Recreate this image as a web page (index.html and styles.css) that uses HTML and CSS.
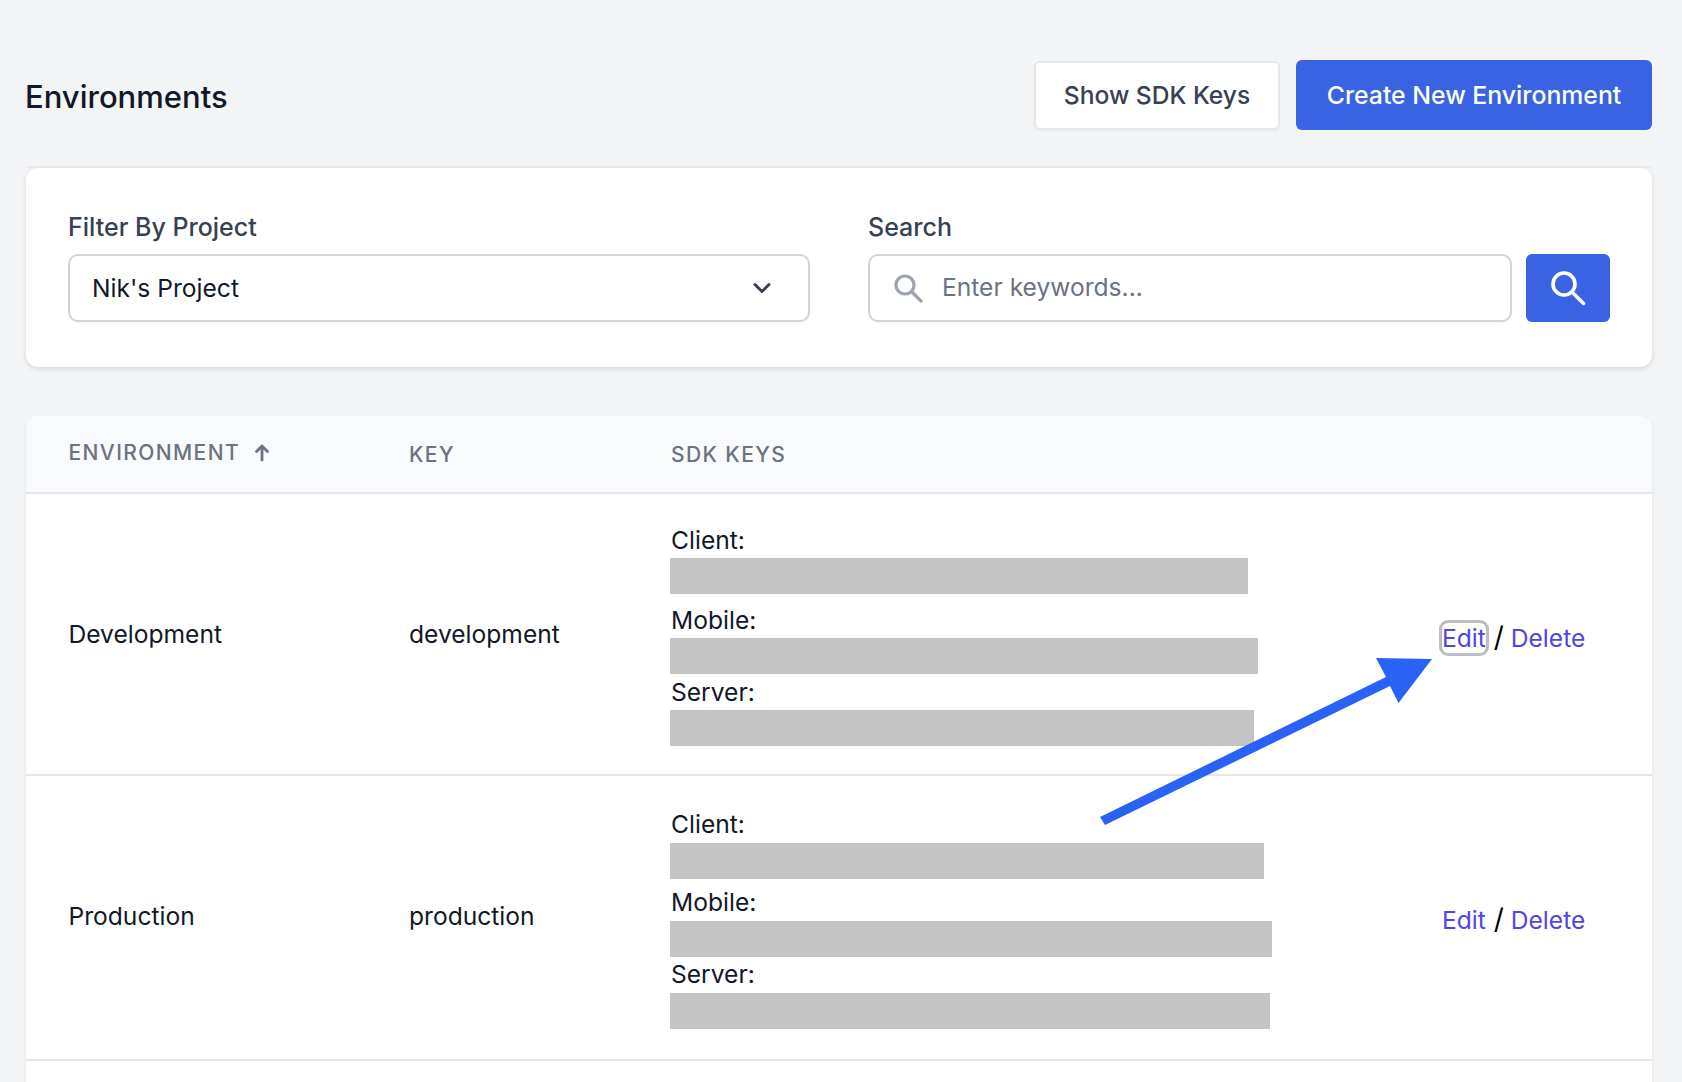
FILE: index.html
```html
<!DOCTYPE html>
<html lang="en">
<head>
    <meta charset="UTF-8">
    <title>Environments</title>
    <link rel="stylesheet" href="styles.css">
</head>
<body>
    <div class="page-header">
        <h1 class="page-title">Environments</h1>
        <div class="header-actions">
            <button type="button" class="btn btn-white">Show SDK Keys</button>
            <button type="button" class="btn btn-blue">Create New Environment</button>
        </div>
    </div>

    <div class="filter-card">
        <div class="filter-project">
            <label class="field-label">Filter By Project</label>
            <div class="select-box">
                <span>Nik's Project</span>
                <svg class="chevron" width="20" height="20" viewBox="0 0 20 20" fill="none" stroke="#374151" stroke-width="3" stroke-linecap="round" stroke-linejoin="round"><path d="M3 6.5l7 7 7-7"/></svg>
            </div>
        </div>
        <div class="filter-search">
            <label class="field-label">Search</label>
            <div class="search-row">
                <div class="search-box">
                    <svg width="32" height="32" viewBox="0 0 32 32" fill="none" stroke="#9ca3af" stroke-width="3.2" stroke-linecap="round"><circle cx="13" cy="13" r="9"/><path d="M20 20l9 9"/></svg>
                    <span class="placeholder">Enter keywords...</span>
                </div>
                <button type="button" class="search-btn">
                    <svg width="38" height="38" viewBox="0 0 38 38" fill="none" stroke="#fff" stroke-width="3.6" stroke-linecap="round"><circle cx="15" cy="15" r="11"/><path d="M23.5 23.5l11 11"/></svg>
                </button>
            </div>
        </div>
    </div>

    <div class="table-card">
        <div class="table-head">
            <div class="col-env head-env">ENVIRONMENT
                <svg width="16" height="18" viewBox="0 0 16 18" fill="none" stroke="#6b7280" stroke-width="2.8" stroke-linecap="round" stroke-linejoin="round"><path d="M8 16V2M2.5 7.5L8 2l5.500 5.500"/></svg>
            </div>
            <div class="col-key">KEY</div>
            <div class="col-sdk head-sdk">SDK KEYS</div>
        </div>

        <div class="table-row row-dev">
            <div class="col-env">Development</div>
            <div class="col-key">development</div>
            <div class="col-sdk">
                <div class="key-block key-first">
                    <div class="key-label">Client:</div>
                    <div class="key-bar" style="width: 578px"></div>
                </div>
                <div class="key-block">
                    <div class="key-label">Mobile:</div>
                    <div class="key-bar" style="width: 588px"></div>
                </div>
                <div class="key-block">
                    <div class="key-label">Server:</div>
                    <div class="key-bar" style="width: 584px"></div>
                </div>
            </div>
            <div class="col-actions"><a class="action-link focused">Edit</a> <span class="slash">/</span> <a class="action-link">Delete</a></div>
        </div>

        <div class="table-row row-prod">
            <div class="col-env">Production</div>
            <div class="col-key">production</div>
            <div class="col-sdk">
                <div class="key-block key-first">
                    <div class="key-label">Client:</div>
                    <div class="key-bar" style="width: 594px"></div>
                </div>
                <div class="key-block">
                    <div class="key-label">Mobile:</div>
                    <div class="key-bar" style="width: 602px"></div>
                </div>
                <div class="key-block">
                    <div class="key-label">Server:</div>
                    <div class="key-bar" style="width: 600px"></div>
                </div>
            </div>
            <div class="col-actions"><a class="action-link">Edit</a> <span class="slash">/</span> <a class="action-link">Delete</a></div>
        </div>
    </div>

    <svg class="arrow" width="1682" height="1082" viewBox="0 0 1682 1082"><polygon fill="#2962f5" points="1100,817 1105,825 1390,686 1398.500,703 1432,659 1376,658 1386,677"/></svg>
</body>
</html>
```

FILE: styles.css
```css
html, body {
    height: 100%;
    overflow: hidden;
}
body {
    margin: 0;
    padding: 61px 30px 0 26px;
    box-sizing: border-box;
    background-color: #f3f4f6;
    font-family: Inter, "Liberation Sans", sans-serif;
    font-size: 24.6px;
    color: #111827;
}

.page-header {
    display: flex;
    justify-content: space-between;
    align-items: center;
    height: 107px;
    padding-bottom: 37px;
    box-sizing: border-box;
    border-bottom: 2px solid #e9eaee;
}
.page-title {
    margin: 3px 0 0 -1px;
    font-size: 31px;
    font-weight: 500;
    color: #111827;
}
.header-actions {
    display: flex;
    gap: 16px;
    align-items: center;
}
.btn {
    font-family: inherit;
    font-size: 24.6px;
    font-weight: 500;
    border-radius: 6px;
    cursor: pointer;
}
.btn-white {
    width: 246px;
    height: 69px;
    background-color: #fff;
    color: #374151;
    border: 2px solid #e5e7eb;
    box-shadow: 0 1px 2px rgba(0, 0, 0, 0.05);
}
.btn-blue {
    width: 356px;
    height: 70px;
    font-size: 24.8px;
    background-color: #3a63e4;
    color: #fff;
    border: none;
}

.filter-card {
    display: flex;
    gap: 58px;
    height: 199px;
    padding: 43px 42px 0 42px;
    box-sizing: border-box;
    background-color: #fff;
    border-radius: 12px;
    box-shadow: 0 2px 5px rgba(0, 0, 0, 0.12);
}
.filter-project {
    width: 742px;
}
.filter-search {
    flex: 1;
}
.field-label {
    display: block;
    height: 43px;
    line-height: 32px;
    font-size: 25px;
    font-weight: 500;
    color: #374151;
}
.select-box, .search-box {
    height: 68px;
    box-sizing: border-box;
    display: flex;
    align-items: center;
    background-color: #fff;
    border: 2px solid #d1d5db;
    border-radius: 10px;
    box-shadow: 0 1px 2px rgba(0, 0, 0, 0.05);
}
.select-box {
    justify-content: space-between;
    padding: 0 36px 0 22px;
}
.search-row {
    display: flex;
    gap: 14px;
}
.search-box {
    flex: 1;
    padding-left: 22px;
    gap: 18px;
}
.placeholder {
    color: #6b7280;
    margin-top: -2px;
}
.search-btn {
    width: 84px;
    height: 68px;
    padding: 0;
    display: flex;
    align-items: center;
    justify-content: center;
    background-color: #3a63e4;
    border: none;
    border-radius: 6px;
}

.table-card {
    margin-top: 49px;
    height: 700px;
    background-color: #fff;
    border-radius: 12px 12px 0 0;
    box-shadow: 0 1px 3px rgba(0, 0, 0, 0.1);
}
.table-head {
    display: flex;
    align-items: center;
    height: 78px;
    box-sizing: border-box;
    border-bottom: 2px solid #e5e7eb;
    background-color: #f9fafb;
    border-radius: 12px 12px 0 0;
    font-size: 21px;
    font-weight: 500;
    letter-spacing: 1.4px;
    color: #6b7280;
}
.head-env {
    display: flex;
    align-items: center;
    gap: 14px;
    margin-top: -3px;
}
.head-sdk {
    padding-left: 1px;
}
.table-row {
    display: flex;
    align-items: center;
    box-sizing: border-box;
    border-bottom: 2px solid #e5e7eb;
}
.row-dev {
    height: 282px;
}
.row-prod {
    height: 285px;
}
.col-env {
    width: 340.5px;
    margin-left: 42.5px;
}
.col-key {
    width: 261px;
}
.col-sdk {
    width: 772px;
    box-sizing: border-box;
}
.col-actions {
    margin-top: 6px;
    word-spacing: 1px;
}
.row-prod .col-env, .row-prod .col-key {
    margin-top: -4px;
}
.row-prod .col-actions {
    margin-top: 2px;
}
.key-first {
    margin-bottom: 8px;
}
.row-prod .key-first {
    margin-bottom: 6px;
}
.key-label {
    height: 36px;
    line-height: 36px;
    padding-left: 1px;
}
.row-prod .key-label {
    line-height: 34px;
}
.key-bar {
    height: 36px;
    background-color: #c4c4c4;
}
.action-link {
    color: #4f46e5;
    cursor: pointer;
}
.focused {
    outline: 3px solid #bcbcc4;
    outline-offset: 0;
    border-radius: 6px;
}
.slash {
    color: #000;
    font-size: 28px;
    margin-right: -1px;
}

.arrow {
    position: absolute;
    top: 0;
    left: 0;
    pointer-events: none;
}
```
